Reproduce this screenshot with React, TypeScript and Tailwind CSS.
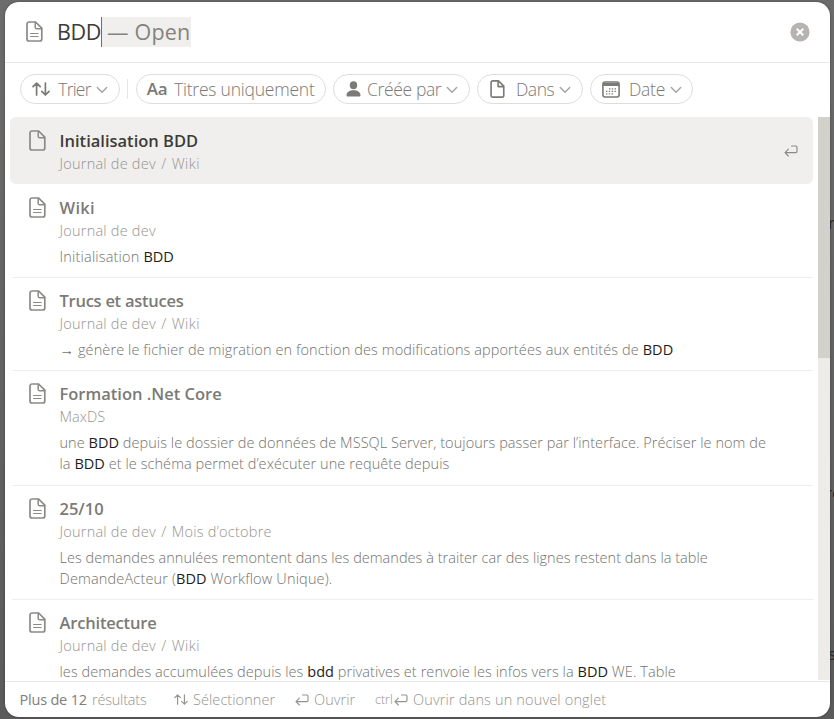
import type { ReactNode } from "react";

type IconProps = { className?: string };

function PageIcon({ className = "", lines = true }: IconProps & { lines?: boolean }) {
  return (
    <svg viewBox="0 0 17 21" fill="none" stroke="currentColor" strokeWidth="1.7" strokeLinejoin="round" strokeLinecap="round" className={`h-[21px] w-[17px] shrink-0 ${className}`}>
      <path d="M3 1h6.6l6.2 6.2V18a2 2 0 0 1-2 2H3a2 2 0 0 1-2-2V3a2 2 0 0 1 2-2Z" />
      <path d="M9.2 1.2v5.1a1.4 1.4 0 0 0 1.4 1.4h5" strokeWidth="1.5" />
      {lines && <path d="M4.6 12.500h7.500M4.6 15.500h7.500" strokeWidth="1.2" />}
    </svg>
  );
}

function SortIcon({ className = "" }: IconProps) {
  return (
    <svg viewBox="0 0 18 14" fill="none" stroke="currentColor" strokeLinecap="round" strokeLinejoin="round" className={`shrink-0 ${className}`}>
      <path d="M4.6 13V1M1 4.6 4.6 1l3.6 3.6M13.4 1v12M9.8 9.4l3.6 3.6L17 9.4" />
    </svg>
  );
}

function Chevron() {
  return (
    <svg viewBox="0 0 12 8" fill="none" stroke="currentColor" strokeWidth="1.4" strokeLinecap="round" strokeLinejoin="round" className="ml-[5px] mt-px h-2 w-3 shrink-0 text-[#a5a4a1]">
      <path d="M1.3 1.5 6 6.3l4.7-4.8" />
    </svg>
  );
}

function EnterIcon({ className = "" }: IconProps) {
  return (
    <svg viewBox="0 0 14 12" fill="none" stroke="currentColor" strokeWidth="1.15" strokeLinecap="round" strokeLinejoin="round" className={`h-3 w-3.5 shrink-0 ${className}`}>
      <path d="M7.5 1h4.2a1.3 1.3 0 0 1 1.3 1.3v4a1.3 1.3 0 0 1-1.3 1.3H1.2M4.4 4.2 1 7.6 4.4 11" />
    </svg>
  );
}

function PersonIcon() {
  return (
    <svg viewBox="0 0 15 16" fill="currentColor" className="h-4 w-[15px] shrink-0">
      <ellipse cx="7.5" cy="4.2" rx="3.7" ry="4" />
      <path d="M.5 14.3c0-3 3-5 7-5s7 2 7 5c0 .8-.5 1.3-1.3 1.3H1.8C1 15.600.5 15.100.5 14.300Z" />
    </svg>
  );
}

function CalendarIcon() {
  return (
    <svg viewBox="0 0 18 17" fill="none" className="h-[17px] w-[18px] shrink-0">
      <rect x=".9" y="1" width="16.200" height="15" rx="2.200" stroke="currentColor" strokeWidth="1.6" />
      <path d="M1 2h16v3H1z" fill="currentColor" />
      <path d="M7 7.800h8M4 10.300h11M4 12.800h8" stroke="currentColor" strokeWidth="1.3" strokeDasharray="1.400 1.400" />
    </svg>
  );
}

function Chip({ width, children }: { width: string; children: ReactNode }) {
  return (
    <button className={`flex h-[30px] shrink-0 items-center whitespace-nowrap rounded-full border border-[#dddddb] text-[17.5px] font-[350] text-[#7b7a76] ${width}`}>
      {children}
    </button>
  );
}

function Hit({ children }: { children: ReactNode }) {
  return <b className="font-medium tracking-[0px] text-[#1d1c19]">{children}</b>;
}

function Crumb({ to, tracking = "tracking-[0.4px]" }: { to?: string; tracking?: string }) {
  return (
    <>
      <span className="tracking-[0.22px]">Journal de dev</span>
      {to && <span className="px-[5.5px]">/</span>}
      {to && <span className={tracking}>{to}</span>}
    </>
  );
}

type ResultProps = {
  title: string;
  titleClass?: string;
  path: ReactNode;
  lines?: boolean;
  selected?: boolean;
  last?: boolean;
  children?: ReactNode;
};

function Result({ title, titleClass = "", path, lines = true, selected, last, children }: ResultProps) {
  return (
    <li className={`ml-[5px] flex w-[803px] shrink-0 pl-[19px] pt-3 ${selected ? "h-[67px] rounded-md bg-[#f0efee]" : ""}`}>
      <PageIcon lines={lines} className="mt-[1px] text-[#8b8a87]" />
      <div className="ml-[13.5px] min-w-0 flex-1 whitespace-nowrap">
        <h3 className={`text-[16.5px] font-semibold leading-6 ${selected ? "text-[#3d3c38]" : "text-[#7b7a76]"} ${titleClass}`}>{title}</h3>
        <p className="text-[14.5px] font-[350] leading-[22px] text-[#959490]">{path}</p>
        {children && <div className="mt-1 text-[14.5px] font-[350] leading-[21px] text-[#72716d]">{children}</div>}
        {!selected && !last && <div className="-mb-px -ml-[47.5px] mt-[10.2px] h-px bg-[#eeeeec]" />}
      </div>
      {selected && <EnterIcon className="mr-[15.5px] mt-[15.5px] text-[#8b8a87]" />}
    </li>
  );
}

export default function App() {
  return (
    <div className="relative flex h-[719px] w-[834px] overflow-hidden bg-linear-to-b from-[#6c6c6c] via-[#636363] to-[#5b5b5b] pl-[5px] pt-0.5 font-['Open_Sans','Noto_Sans',sans-serif]">
      <span className="absolute left-[828px] top-[211px] text-[17px] leading-6 text-[#33261f]">n</span>
      <span className="absolute left-[825px] top-[481px] text-[17px] leading-6 text-[#25272b]">re</span>
      <span className="absolute left-[828px] top-[642px] text-[17px] leading-6 text-[#25272b]">s</span>
      <main className="relative flex h-[715px] w-[825px] flex-col overflow-hidden rounded-[14px] bg-white shadow-[0_0_3px_rgba(0,0,0,0.35)]">
        <header className="flex h-[61px] shrink-0 items-center border-b border-[#e8e8e7] pl-[20.500px] pr-[20px]">
          <PageIcon className="-mt-px text-[#8b8a87]" />
          <div className="ml-[14.5px] flex h-[30px] items-center whitespace-nowrap text-[21.5px]">
            <span className="w-11 tracking-[-0.4px] text-[#3d3c38]">BDD</span>
            <span className="flex h-[30px] w-[90px] items-center border-l border-[#6f6e6a] bg-[#f0efee] pl-[5px] tracking-[0.2px] text-[#83827e]">— Open</span>
          </div>
          <svg viewBox="0 0 20 20" className="ml-auto h-5 w-5">
            <circle cx="10" cy="10" r="9.600" fill="#b5b4b2" />
            <path d="m6.700 6.700 6.600 6.600m0-6.600-6.600 6.600" stroke="white" strokeWidth="2" />
          </svg>
        </header>

        <div className="flex h-[54px] shrink-0 items-start gap-[7px] pl-[15px] pt-[11px]">
          <Chip width="w-[100px] pl-[11px]">
            <SortIcon className="h-3.5 w-[18px] stroke-[1.7]" />
            <span className="ml-2 w-[33px] pt-px tracking-[-0.8px]">Trier</span>
            <Chevron />
          </Chip>
          <div className="mt-[5px] h-5 w-0.5 border-l border-[#e6e6e4]" />
          <Chip width="w-[190px] pl-[9px]">
            <span className="w-[22px] text-[17px] font-semibold tracking-[-0.2px]">Aa</span>
            <span className="ml-1.5 pt-px tracking-[-0.22px]">Titres uniquement</span>
          </Chip>
          <Chip width="w-[137px] pl-[12px]">
            <PersonIcon />
            <span className="ml-1.5 w-[74px] pt-px tracking-[-0.36px]">Créée par</span>
            <Chevron />
          </Chip>
          <Chip width="w-[106px] pl-[12px]">
            <svg viewBox="0 0 17 21" fill="none" stroke="currentColor" strokeWidth="1.900" strokeLinejoin="round" className="h-[18px] w-[15px] shrink-0">
              <path d="M3 1h6.600l6.200 6.200V18a2 2 0 0 1-2 2H3a2 2 0 0 1-2-2V3a2 2 0 0 1 2-2Z" />
              <path d="M9.200 1.200v6.500h6.400" />
            </svg>
            <span className="ml-[11px] w-[38px] pt-px tracking-[-0.5px]">Dans</span>
            <Chevron />
          </Chip>
          <Chip width="w-[103px] pl-[11px]">
            <CalendarIcon />
            <span className="ml-[9px] w-9 pt-px tracking-[-0.3px]">Date</span>
            <Chevron />
          </Chip>
        </div>

        <section className="flex h-[563px] shrink-0 overflow-hidden">
          <ul className="flex h-full w-[813px] flex-col overflow-hidden">
            <Result selected lines={false} title="Initialisation BDD" path={<Crumb to="Wiki" />} />
            <Result title="Wiki" titleClass="tracking-[0.3px]" path={<Crumb />}>
              <p className="tracking-[0.18px]">Initialisation <Hit>BDD</Hit></p>
            </Result>
            <Result title="Trucs et astuces" titleClass="tracking-[-0.26px]" path={<Crumb to="Wiki" />}>
              <p className="tracking-[0.1px]">→ génère le fichier de migration en fonction des modifications apportées aux entités de <Hit>BDD</Hit></p>
            </Result>
            <Result title="Formation .Net Core" path="MaxDS">
              <p className="tracking-[0.06px]">une <Hit>BDD</Hit> depuis le dossier de données de MSSQL Server, toujours passer par l’interface. Préciser le nom de</p>
              <p className="tracking-[0.07px]">la <Hit>BDD</Hit> et le schéma permet d’exécuter une requête depuis</p>
            </Result>
            <Result title="25/10" path={<Crumb to="Mois d’octobre" tracking="tracking-[0.25px]" />}>
              <p className="tracking-[0.03px]">Les demandes annulées remontent dans les demandes à traiter car des lignes restent dans la table</p>
              <p className="tracking-[0.16px]">DemandeActeur (<Hit>BDD</Hit> Workflow Unique).</p>
            </Result>
            <Result last title="Architecture" titleClass="tracking-[-0.18px]" path={<Crumb to="Wiki" />}>
              <p className="tracking-[0.08px]">les demandes accumulées depuis les <Hit>bdd</Hit> privatives et renvoie les infos vers la <Hit>BDD</Hit> WE. Table</p>
            </Result>
          </ul>
          <div className="h-full w-3 bg-[#edece9]">
            <div className="h-[241px] bg-[#d3d1cb]" />
          </div>
        </section>

        <footer className="mt-px flex h-9 shrink-0 items-center whitespace-nowrap border-t border-[#e8e8e7] pl-[14.5px] text-[14.5px] font-[350] text-[#959490]">
          <span className="w-[67.5px] pt-px font-medium tracking-[-0.2px] text-[#7f7e7a]">Plus de 12</span>
          <span className="ml-[5px] w-14 pt-px tracking-[-0.2px]">résultats</span>
          <SortIcon className="ml-[26px] h-[11px] w-[14px] stroke-[1.5]" />
          <span className="ml-[5px] w-[82px] tracking-[0.07px]">Sélectionner</span>
          <EnterIcon className="ml-[20px]" />
          <span className="ml-[5px] w-[41px] tracking-[0.05px]">Ouvrir</span>
          <span className="ml-[20px] w-[19px] pt-0.5 text-[12.5px]">ctrl</span>
          <EnterIcon />
          <span className="ml-[5px] tracking-[0.16px]">Ouvrir dans un nouvel onglet</span>
        </footer>
      </main>
    </div>
  );
}
